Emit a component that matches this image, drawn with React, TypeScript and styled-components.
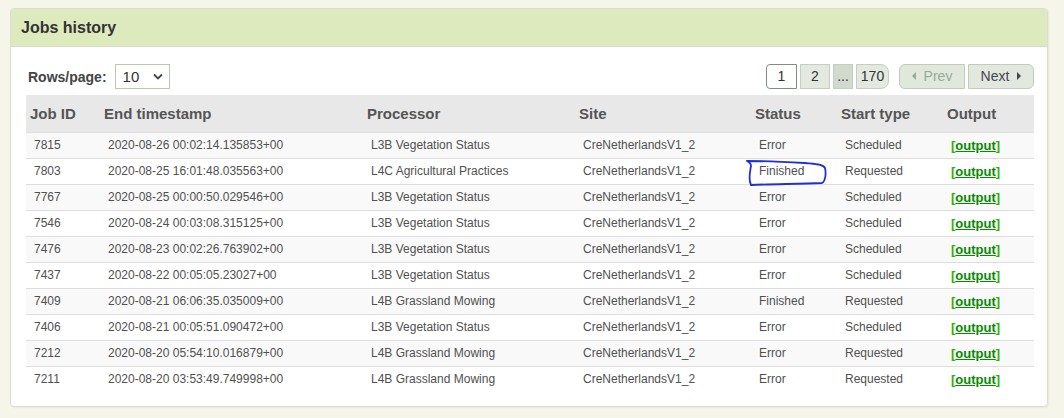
import styled, { createGlobalStyle } from "styled-components";

const GlobalStyle = createGlobalStyle`
  body {
    margin: 0;
    background: #f5f5ea;
    font-family: "Liberation Sans", Arial, sans-serif;
  }
`;

const Page = styled.div`
  padding: 8px 0 0 10px;
  height: 418px;
  box-sizing: border-box;
`;

const Panel = styled.section`
  width: 1038px;
  height: 399px;
  box-sizing: border-box;
  background: #fff;
  border: 1px solid #dcdcd4;
  border-radius: 4px;
  box-shadow: 1px 1px 2px rgba(0, 0, 0, 0.05);
  overflow: hidden;
`;

const PanelHead = styled.header`
  height: 37px;
  display: flex;
  align-items: center;
  padding: 0 10px;
  background: #dceabd;
  border-bottom: 1px solid #d4dccb;
  color: #333;
  font-weight: bold;
  font-size: 16px;
`;

const PanelBody = styled.div`
  padding: 17px 13px 0 15px;
`;

const Toolbar = styled.div`
  display: flex;
  align-items: center;
  justify-content: space-between;
  height: 25px;
  margin-bottom: 6px;
`;

const RowsControl = styled.label`
  display: flex;
  align-items: center;
  gap: 8px;
  padding-left: 2px;
  font-size: 14px;
  font-weight: bold;
  color: #444;
`;

const SelectBox = styled.div`
  width: 55px;
  height: 25px;
  box-sizing: border-box;
  border: 1px solid #b8cbb0;
  display: flex;
  align-items: center;
  justify-content: space-between;
  padding: 0 6px 0 7px;
  font-size: 15px;
  font-weight: normal;
  color: #333;
`;

const Pager = styled.div`
  display: flex;
  align-items: center;
  gap: 10px;
  margin-top: -1px;
`;

const Group = styled.div`
  display: flex;
  gap: 3px;
`;

const PageBtn = styled.div<{ $w: number; $active?: boolean; $muted?: boolean; $first?: boolean; $last?: boolean }>`
  width: ${(p) => p.$w}px;
  height: 25px;
  box-sizing: border-box;
  display: flex;
  align-items: center;
  justify-content: center;
  font-size: 14px;
  color: #333;
  background: ${(p) => (p.$active ? "#fff" : p.$muted ? "#d2dacd" : "#e3e9df")};
  border: 1px solid ${(p) => (p.$active ? "#7f8f7f" : "#c4cfc0")};
  border-radius: ${(p) => (p.$first ? "4px 0 0 4px" : p.$last ? "0 8px 8px 0" : "0")};
`;

const NavBtn = styled.div<{ $disabled?: boolean; $side: "left" | "right" }>`
  width: 66px;
  height: 25px;
  box-sizing: border-box;
  display: flex;
  align-items: center;
  justify-content: center;
  gap: 8px;
  font-size: 14px;
  color: ${(p) => (p.$disabled ? "#9aa99a" : "#445")};
  background: ${(p) => (p.$disabled ? "#dfe8da" : "#e3e8de")};
  border: 1px solid #c1ccbd;
  border-radius: ${(p) => (p.$side === "left" ? "6px 0 0 6px" : "0 6px 6px 0")};
`;

const Tri = styled.span<{ $dir: "left" | "right" }>`
  width: 0;
  height: 0;
  border-top: 4px solid transparent;
  border-bottom: 4px solid transparent;
  ${(p) => (p.$dir === "left" ? "border-right: 4px solid currentColor;" : "border-left: 4px solid currentColor;")}
`;

const Table = styled.table`
  width: 1008px;
  border-collapse: collapse;
  table-layout: fixed;
`;

const Th = styled.th<{ $w: number }>`
  width: ${(p) => p.$w}px;
  box-sizing: border-box;
  height: 37px;
  padding: 0 0 0 4px;
  text-align: left;
  background: #e8e8e8;
  color: #555;
  font-size: 15px;
  font-weight: bold;
`;

const Tr = styled.tr<{ $odd: boolean }>`
  background: ${(p) => (p.$odd ? "#f9f9f9" : "#fff")};
`;

const Td = styled.td`
  position: relative;
  height: 25px;
  padding: 0 0 0 8px;
  border-top: 1px solid #dedede;
  font-size: 12px;
  color: #505050;
  white-space: nowrap;
`;

const OutputLink = styled.span`
  font-size: 13px;
  font-weight: bold;
  color: #33b000;
  a {
    color: #078a00;
    text-decoration: underline;
  }
`;

const Scribble = styled.svg`
  position: absolute;
  left: -5px;
  top: -2px;
  pointer-events: none;
`;

const columns: [string, number][] = [
  ["Job ID", 74],
  ["End timestamp", 263],
  ["Processor", 212],
  ["Site", 176],
  ["Status", 86],
  ["Start type", 106],
  ["Output", 91],
];

const jobs = [
  ["7815", "2020-08-26 00:02:14.135853+00", "L3B Vegetation Status", "Error", "Scheduled"],
  ["7803", "2020-08-25 16:01:48.035563+00", "L4C Agricultural Practices", "Finished", "Requested"],
  ["7767", "2020-08-25 00:00:50.029546+00", "L3B Vegetation Status", "Error", "Scheduled"],
  ["7546", "2020-08-24 00:03:08.315125+00", "L3B Vegetation Status", "Error", "Scheduled"],
  ["7476", "2020-08-23 00:02:26.763902+00", "L3B Vegetation Status", "Error", "Scheduled"],
  ["7437", "2020-08-22 00:05:05.23027+00", "L3B Vegetation Status", "Error", "Scheduled"],
  ["7409", "2020-08-21 06:06:35.035009+00", "L4B Grassland Mowing", "Finished", "Requested"],
  ["7406", "2020-08-21 00:05:51.090472+00", "L3B Vegetation Status", "Error", "Scheduled"],
  ["7212", "2020-08-20 05:54:10.016879+00", "L4B Grassland Mowing", "Error", "Requested"],
  ["7211", "2020-08-20 03:53:49.749998+00", "L4B Grassland Mowing", "Error", "Requested"],
];

const App = () => {
  return (
    <Page>
      <GlobalStyle />
      <Panel>
        <PanelHead>Jobs history</PanelHead>
        <PanelBody>
          <Toolbar>
            <RowsControl>
              Rows/page:
              <SelectBox>
                10
                <svg width="10" height="7" viewBox="0 0 10 7">
                  <path d="M1 1.5 L5 5.5 L9 1.5" stroke="#444" strokeWidth="1.8" fill="none" />
                </svg>
              </SelectBox>
            </RowsControl>
            <Pager>
              <Group>
                <PageBtn $w={31} $active $first>1</PageBtn>
                <PageBtn $w={30}>2</PageBtn>
                <PageBtn $w={20} $muted>...</PageBtn>
                <PageBtn $w={33} $last>170</PageBtn>
              </Group>
              <Group>
                <NavBtn $disabled $side="left">
                  <Tri $dir="left" />
                  Prev
                </NavBtn>
                <NavBtn $side="right">
                  Next
                  <Tri $dir="right" />
                </NavBtn>
              </Group>
            </Pager>
          </Toolbar>
          <Table>
            <thead>
              <tr>
                {columns.map(([name, w]) => (
                  <Th key={name} $w={w}>
                    {name}
                  </Th>
                ))}
              </tr>
            </thead>
            <tbody>
              {jobs.map((job, i) => (
                <Tr key={job[0]} $odd={i % 2 === 0}>
                  <Td>{job[0]}</Td>
                  <Td>{job[1]}</Td>
                  <Td>{job[2]}</Td>
                  <Td>CreNetherlandsV1_2</Td>
                  <Td>
                    {job[3]}
                    {i === 1 && (
                      <Scribble width="90" height="32" viewBox="0 0 90 32">
                        <path
                          d="M1 4 C3 5 5 6 5 9 C4 15 2 22 5 28 C25 27 55 27 76 26 C80 24 80 15 79 11 C77 7 69 7 59 6 C40 5 20 4 1 4"
                          stroke="#1f2fd6"
                          strokeWidth="1.8"
                          fill="none"
                          strokeLinecap="round"
                        />
                      </Scribble>
                    )}
                  </Td>
                  <Td>{job[4]}</Td>
                  <Td>
                    <OutputLink>
                      [<a>output</a>]
                    </OutputLink>
                  </Td>
                </Tr>
              ))}
            </tbody>
          </Table>
        </PanelBody>
      </Panel>
    </Page>
  );
};

export default App;
